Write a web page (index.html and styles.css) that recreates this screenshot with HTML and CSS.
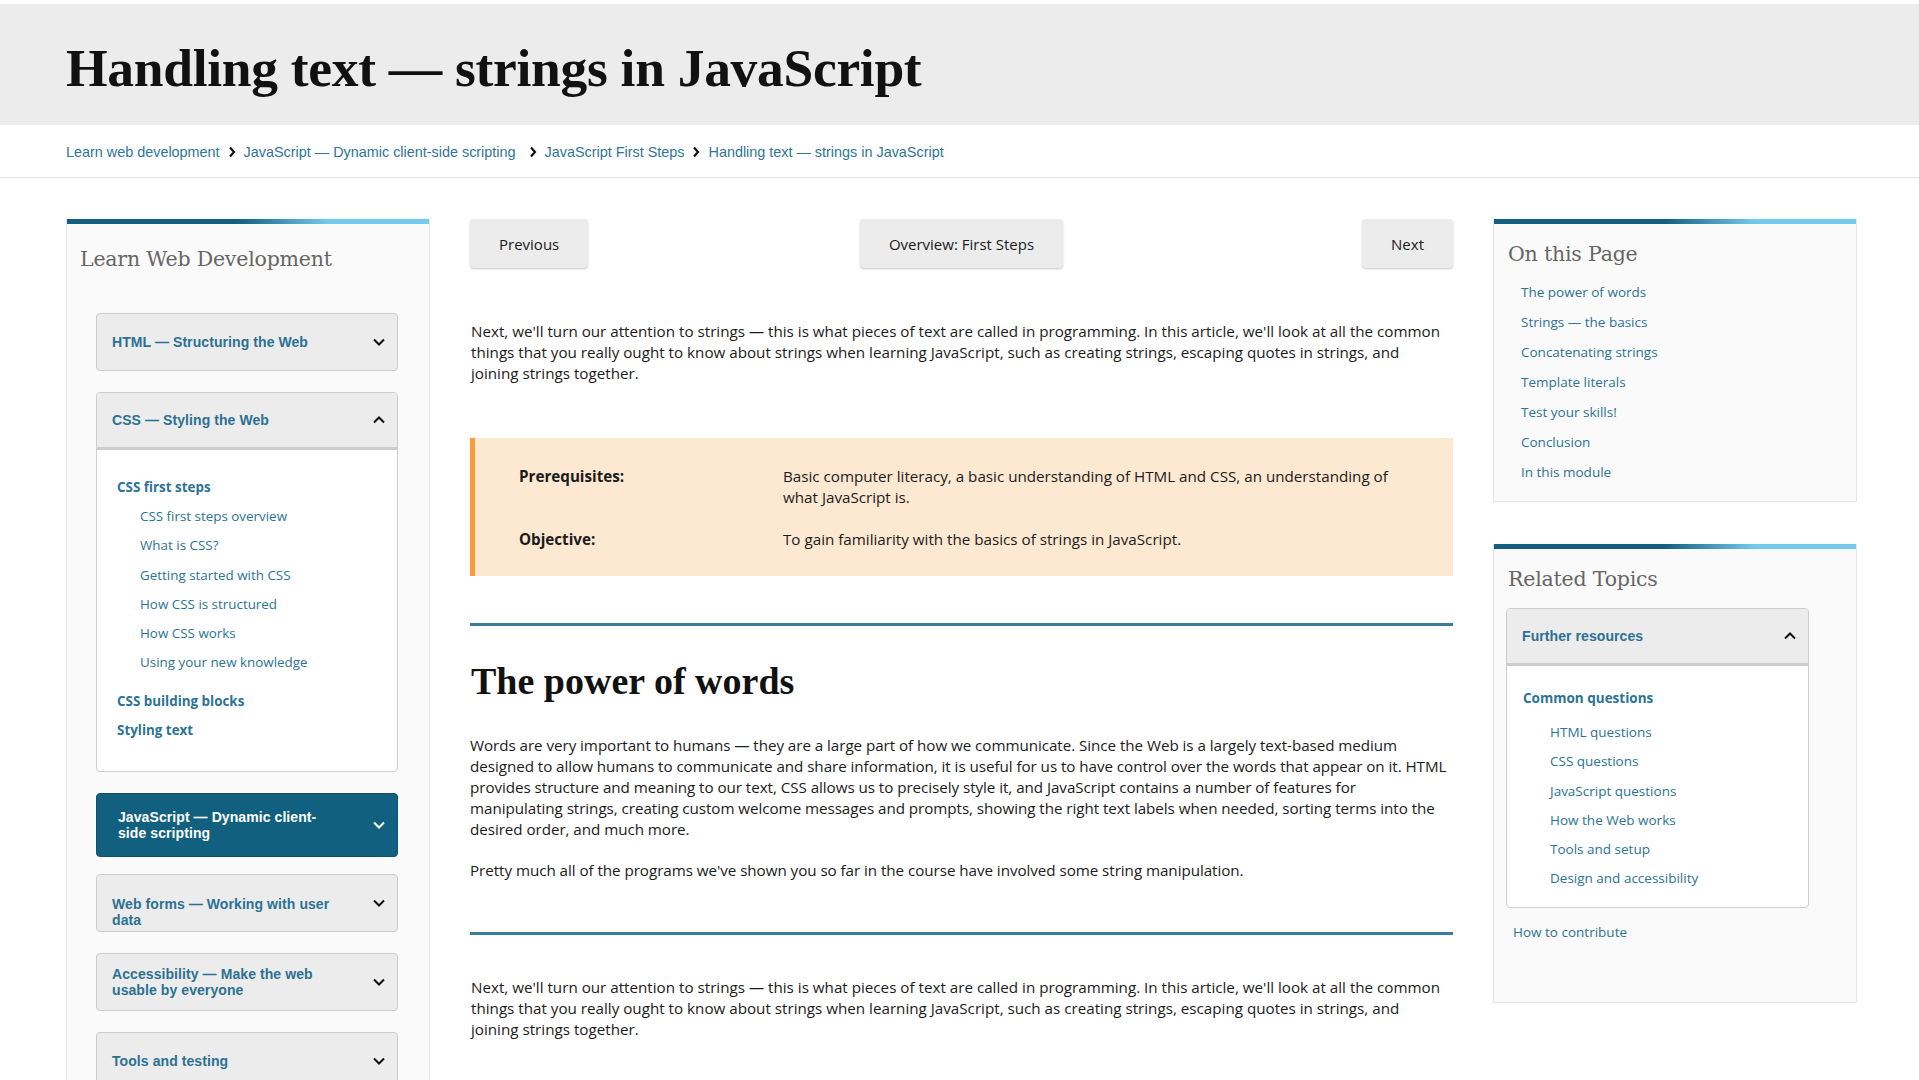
FILE: index.html
```html
<!DOCTYPE html>
<html lang="en">
<head>
<meta charset="utf-8">
<title>Handling text — strings in JavaScript</title>
<link rel="stylesheet" href="styles.css">
</head>
<body>
<header class="hero">
  <h1 class="hero-title">Handling text — strings in JavaScript</h1>
</header>
<nav class="crumbs">
  <a href="#">Learn web development</a>
  <svg class="crumb-sep" viewBox="0 0 8 12" width="8" height="12"><path d="M2 1.5l4 4.5-4 4.5" fill="none" stroke="#111" stroke-width="2.2"/></svg>
  <a href="#">JavaScript — Dynamic client-side scripting</a>
  <svg class="crumb-sep wide" viewBox="0 0 8 12" width="8" height="12"><path d="M2 1.5l4 4.5-4 4.5" fill="none" stroke="#111" stroke-width="2.2"/></svg>
  <a href="#">JavaScript First Steps</a>
  <svg class="crumb-sep" viewBox="0 0 8 12" width="8" height="12"><path d="M2 1.5l4 4.5-4 4.5" fill="none" stroke="#111" stroke-width="2.2"/></svg>
  <a href="#">Handling text — strings in JavaScript</a>
</nav>

<div class="layout">
  <aside class="panel panel-left">
    <h3 class="panel-title">Learn Web Development</h3>
    <div class="acc-list">
      <div class="acc">
        <div class="acc-head"><span class="acc-text">HTML — Structuring the Web</span><svg class="chev" viewBox="0 0 12 8" width="12" height="8"><path d="M1 1.5l5 5 5-5" fill="none" stroke="#111" stroke-width="2"/></svg></div>
      </div>
      <div class="acc open">
        <div class="acc-head"><span class="acc-text">CSS — Styling the Web</span><svg class="chev" viewBox="0 0 12 8" width="12" height="8"><path d="M1 6.5l5-5 5 5" fill="none" stroke="#111" stroke-width="2"/></svg></div>
        <div class="tree">
          <a class="tree-title" href="#">CSS first steps</a>
          <div class="tree-sub">
            <a href="#">CSS first steps overview</a>
            <a href="#">What is CSS?</a>
            <a href="#">Getting started with CSS</a>
            <a href="#">How CSS is structured</a>
            <a href="#">How CSS works</a>
            <a href="#">Using your new knowledge</a>
          </div>
          <a class="tree-title" href="#">CSS building blocks</a>
          <a class="tree-title" href="#">Styling text</a>
        </div>
      </div>
      <div class="acc active">
        <div class="acc-head tall"><span class="acc-text">JavaScript — Dynamic client-side scripting</span><svg class="chev" viewBox="0 0 12 8" width="12" height="8"><path d="M1 1.5l5 5 5-5" fill="none" stroke="#fff" stroke-width="2"/></svg></div>
      </div>
      <div class="acc">
        <div class="acc-head two low"><span class="acc-text">Web forms — Working with user data</span><svg class="chev" viewBox="0 0 12 8" width="12" height="8"><path d="M1 1.5l5 5 5-5" fill="none" stroke="#111" stroke-width="2"/></svg></div>
      </div>
      <div class="acc">
        <div class="acc-head two"><span class="acc-text">Accessibility — Make the web usable by everyone</span><svg class="chev" viewBox="0 0 12 8" width="12" height="8"><path d="M1 1.5l5 5 5-5" fill="none" stroke="#111" stroke-width="2"/></svg></div>
      </div>
      <div class="acc">
        <div class="acc-head"><span class="acc-text">Tools and testing</span><svg class="chev" viewBox="0 0 12 8" width="12" height="8"><path d="M1 1.5l5 5 5-5" fill="none" stroke="#111" stroke-width="2"/></svg></div>
      </div>
      <div class="acc">
        <div class="acc-head"><span class="acc-text">Server-side website programming</span><svg class="chev" viewBox="0 0 12 8" width="12" height="8"><path d="M1 1.5l5 5 5-5" fill="none" stroke="#111" stroke-width="2"/></svg></div>
      </div>
    </div>
  </aside>

  <main class="article">
    <div class="pager">
      <a class="btn prev" href="#">Previous</a>
      <a class="btn mid" href="#">Overview: First Steps</a>
      <a class="btn next" href="#">Next</a>
    </div>

    <p class="lead">Next, we'll turn our attention to strings — this is what pieces of text are called in programming. In this article, we'll look at all the common things that you really ought to know about strings when learning JavaScript, such as creating strings, escaping quotes in strings, and joining strings together.</p>

    <div class="prereq">
      <div class="prereq-row">
        <div class="prereq-label">Prerequisites:</div>
        <div class="prereq-value">Basic computer literacy, a basic understanding of HTML and CSS, an understanding of what JavaScript is.</div>
      </div>
      <div class="prereq-row">
        <div class="prereq-label">Objective:</div>
        <div class="prereq-value">To gain familiarity with the basics of strings in JavaScript.</div>
      </div>
    </div>

    <hr class="rule first">

    <h2 class="section-title">The power of words</h2>
    <p class="body-p">Words are very important to humans — they are a large part of how we communicate. Since the Web is a largely text-based medium designed to allow humans to communicate and share information, it is useful for us to have control over the words that appear on it. HTML provides structure and meaning to our text, CSS allows us to precisely style it, and JavaScript contains a number of features for<br>manipulating strings, creating custom welcome messages and prompts, showing the right text labels when needed, sorting terms into the desired order, and much more.</p>
    <p class="body-p">Pretty much all of the programs we've shown you so far in the course have involved some string manipulation.</p>

    <hr class="rule second">

    <p class="body-p lead last">Next, we'll turn our attention to strings — this is what pieces of text are called in programming. In this article, we'll look at all the common things that you really ought to know about strings when learning JavaScript, such as creating strings, escaping quotes in strings, and joining strings together.</p>
  </main>

  <div class="right-col">
    <aside class="panel panel-toc">
      <h3 class="panel-title">On this Page</h3>
      <ul class="toc">
        <li><a href="#">The power of words</a></li>
        <li><a href="#">Strings — the basics</a></li>
        <li><a href="#">Concatenating strings</a></li>
        <li><a href="#">Template literals</a></li>
        <li><a href="#">Test your skills!</a></li>
        <li><a href="#">Conclusion</a></li>
        <li><a href="#">In this module</a></li>
      </ul>
    </aside>
    <aside class="panel panel-related">
      <h3 class="panel-title">Related Topics</h3>
      <div class="acc open related-acc">
        <div class="acc-head"><span class="acc-text">Further resources</span><svg class="chev" viewBox="0 0 12 8" width="12" height="8"><path d="M1 6.5l5-5 5 5" fill="none" stroke="#111" stroke-width="2"/></svg></div>
        <div class="tree rel-tree">
          <a class="tree-title" href="#">Common questions</a>
          <div class="tree-sub">
            <a href="#">HTML questions</a>
            <a href="#">CSS questions</a>
            <a href="#">JavaScript questions</a>
            <a href="#">How the Web works</a>
            <a href="#">Tools and setup</a>
            <a href="#">Design and accessibility</a>
          </div>
        </div>
      </div>
      <a class="contribute" href="#">How to contribute</a>
    </aside>
  </div>
</div>
</body>
</html>
```

FILE: styles.css
```css
* { box-sizing: border-box; }

body {
  margin: 0;
  padding-top: 4px;
  background: #fff;
  color: #1b1b1b;
  font-family: "Liberation Sans", Arial, sans-serif;
}

a { text-decoration: none; color: #2c7396; }

/* Header */
.hero {
  background: #ececec;
  height: 121px;
  display: flex;
  align-items: center;
  padding: 6px 0 0 66px;
}
.hero-title {
  margin: 0;
  font-family: "Liberation Serif", "DejaVu Serif", serif;
  font-weight: 700;
  font-size: 53.5px;
  letter-spacing: -0.3px;
  color: #111;
}

/* Breadcrumbs */
.crumbs {
  height: 53px;
  border-bottom: 1px solid #e4e4e4;
  display: flex;
  align-items: center;
  padding: 2px 0 0 66px;
  font-size: 14.4px;
}
.crumbs a { color: #2e7699; }
.crumb-sep { margin: 0 8px 0 8px; }
.crumb-sep.wide { margin-left: 13px; }

/* Layout */
.layout {
  display: grid;
  grid-template-columns: 364px 983px 364px;
  column-gap: 40px;
  margin: 41px 0 0 66px;
  align-items: start;
}

.panel {
  background:
    linear-gradient(90deg, #12607f 0%, #12607f 47%, #3b8db3 58%, #74c9ef 72%, #74c9ef 100%) top left / 100% 5px no-repeat,
    #fafafa;
  border: 1px solid #e3e6e8;
  border-top: 0;
  padding-top: 5px;
}
.panel-title {
  margin: 0;
  font-family: "DejaVu Serif", "Liberation Serif", serif;
  font-weight: 400;
  font-size: 20.5px;
  line-height: 28px;
  color: #666;
  letter-spacing: -0.2px;
}

/* Left panel */
.panel-left { padding-bottom: 40px; }
.panel-left .panel-title { padding: 21px 0 0 13px; }
.acc-list { padding: 40px 31px 0 29px; }

.acc {
  border: 1px solid #cdcdcd;
  border-radius: 4px;
  background: #ececec;
  margin-bottom: 21px;
  overflow: hidden;
}
.acc-head {
  display: flex;
  align-items: center;
  justify-content: space-between;
  height: 56px;
  padding: 0 12px 0 15px;
  font-weight: 700;
  font-size: 14px;
  line-height: 16px;
  letter-spacing: 0.08px;
  color: #2b7193;
}
.acc-text { max-width: 222px; }
.acc-head.tall { height: 62px; padding-left: 21px; }
.acc-head.two { height: 56px; }
.acc-head.low .acc-text { align-self: flex-start; padding-top: 21px; }
.chev { flex: none; }

.acc.open { background: #fff; }
.acc.open .acc-head { border-bottom: 3px solid #cdcdcd; height: 57px; background: #ececec; }

.acc.active { background: #11607f; border-color: #0e516c; margin-bottom: 17px; }
.acc.active .acc-head { color: #fff; }

.tree {
  padding: 23px 20px 26px;
  font-family: "Open Sans", "Noto Sans", sans-serif;
  font-size: 13.4px;
}
.tree a { display: block; }
.tree-title {
  font-weight: 700;
  line-height: 29px;
}
.tree-sub { padding-left: 23px; margin-bottom: 9px; }
.tree-sub a { line-height: 29.3px; }

/* Main */
.article { min-width: 0; }
.pager {
  display: grid;
  grid-template-columns: 1fr auto 1fr;
  align-items: start;
}
.btn {
  display: flex;
  align-items: center;
  height: 49px;
  padding: 0 29px;
  background: #ececec;
  border-radius: 4px;
  box-shadow: 0 1px 2px rgba(0,0,0,0.22);
  color: #1b1b1b;
  font-family: "Open Sans", "Noto Sans", sans-serif;
  font-size: 15px;
}
.btn.prev { justify-self: start; }
.btn.mid { justify-self: center; }
.btn.next { justify-self: end; }

.lead, .body-p, .prereq {
  font-family: "Open Sans", "Noto Sans", sans-serif;
  font-size: 15.2px;
  line-height: 21px;
  color: #1b1b1b;
}
.body-p { letter-spacing: -0.05px; }
.lead { margin: 53px 12px 0 1px; }

.prereq {
  margin-top: 54px;
  background: #fde8d2;
  border-left: 5px solid #f99d3b;
  padding: 28px 40px 26px 44px;
}
.prereq-row { display: flex; }
.prereq-row + .prereq-row { margin-top: 21px; }
.prereq-label { flex: none; width: 264px; font-weight: 700; }
.prereq-value { flex: 1; }

.rule {
  border: 0;
  border-top: 3px solid #3d7b9b;
  margin: 47px 0 0;
}
.rule.second { margin-top: 51px; }

.section-title {
  margin: 35px 0 0 1px;
  font-family: "Liberation Serif", "DejaVu Serif", serif;
  font-weight: 700;
  font-size: 38px;
  line-height: 40px;
  color: #111;
}
.body-p { margin: 20px 0 0; }
.section-title + .body-p { margin-top: 34px; }
.body-p.last { margin: 42px 12px 0 1px; letter-spacing: 0; }

/* Right column */
.right-col { display: flex; flex-direction: column; gap: 42px; }
.panel-toc .panel-title,
.panel-related .panel-title { padding: 16px 0 0 14px; }
.toc {
  list-style: none;
  margin: 9px 0 0;
  padding: 0 0 14px 27px;
  font-family: "Open Sans", "Noto Sans", sans-serif;
  font-size: 13.5px;
}
.toc li { line-height: 30px; }

.panel-related { padding-bottom: 55px; }
.related-acc { margin: 15px 47px 0 12px; }
.related-acc .acc-head { height: 59px; }
.rel-tree { padding: 18px 20px 13px 16px; font-size: 13.5px; }
.rel-tree .tree-title { margin-bottom: 5px; }
.rel-tree .tree-sub { padding-left: 27px; margin-bottom: 0; }
.contribute {
  display: block;
  margin: 10px 0 0 19px;
  font-family: "Open Sans", "Noto Sans", sans-serif;
  font-size: 13.5px;
  line-height: 29px;
}
```
